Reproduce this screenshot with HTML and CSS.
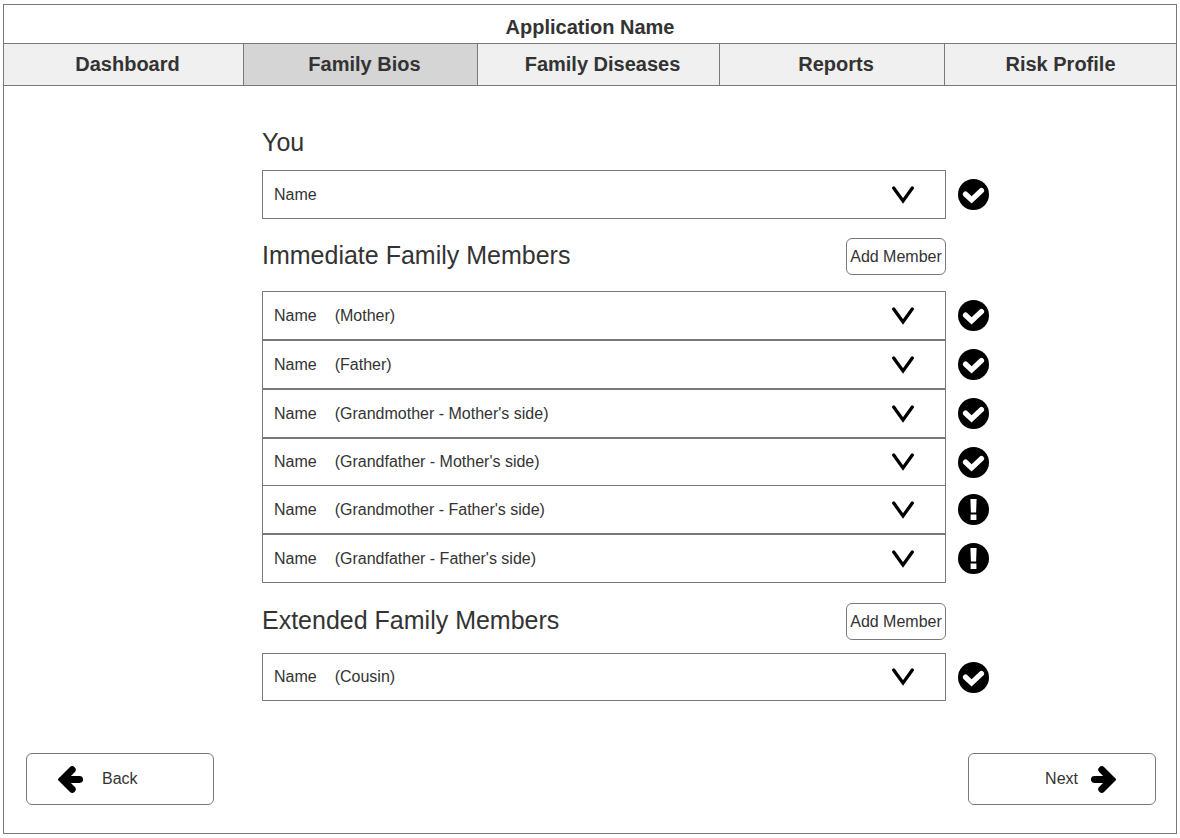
FILE: index.html
```html
<!DOCTYPE html>
<html lang="en">
<head>
<meta charset="utf-8">
<title>Application Name</title>
<link rel="stylesheet" href="styles.css">
</head>
<body>
<svg class="sprite" aria-hidden="true">
  <symbol id="chevron" viewBox="0 0 22 18"><path d="M1.7 2 11 15 20.3 2" fill="none" stroke="#000" stroke-width="3.3" stroke-linecap="round" stroke-linejoin="miter"/></symbol>
  <symbol id="done" viewBox="0 0 31 31"><circle cx="15.5" cy="15.5" r="15.5"/><path d="M7.6 15.2 13.6 20.9 23.4 11.6" fill="none" stroke="#fff" stroke-width="5.4" stroke-linecap="round" stroke-linejoin="miter"/></symbol>
  <symbol id="alert" viewBox="0 0 31 31"><circle cx="15.5" cy="15.5" r="15.5"/><path d="M12.4 5h6.2l-.5 13.6h-5.2zM12.6 20.4h5.8V26h-5.8z" fill="#fff"/></symbol>
  <symbol id="arrow-left" viewBox="0 0 25 27"><path d="M14.2 3.8 4.4 13.5 14.2 23.2M5 13.5H21.6" fill="none" stroke="#000" stroke-width="7" stroke-linecap="round" stroke-linejoin="miter"/></symbol>
  <symbol id="arrow-right" viewBox="0 0 25 27"><path d="M10.8 3.8 20.6 13.5 10.8 23.2M20 13.5H3.4" fill="none" stroke="#000" stroke-width="7" stroke-linecap="round" stroke-linejoin="miter"/></symbol>
</svg>
<div class="frame">
  <header class="title"><h1>Application Name</h1></header>
  <nav class="tabs">
    <a href="#dashboard">Dashboard</a>
    <a href="#bios" class="active" aria-current="page">Family Bios</a>
    <a href="#diseases">Family Diseases</a>
    <a href="#reports">Reports</a>
    <a href="#risk">Risk Profile</a>
  </nav>
  <main class="content">
    <section class="group you">
      <div class="head"><h2>You</h2></div>
      <ul>
        <li><button type="button" class="member" aria-expanded="false"><span class="name">Name</span><svg class="chevron"><use href="#chevron"/></svg></button><svg class="status" role="img" aria-label="Complete"><use href="#done"/></svg></li>
      </ul>
    </section>
    <section class="group immediate">
      <div class="head"><h2>Immediate Family Members</h2><button type="button" class="add">Add Member</button></div>
      <ul>
        <li><button type="button" class="member" aria-expanded="false"><span class="name">Name</span><span>(Mother)</span><svg class="chevron"><use href="#chevron"/></svg></button><svg class="status" role="img" aria-label="Complete"><use href="#done"/></svg></li>
        <li><button type="button" class="member" aria-expanded="false"><span class="name">Name</span><span>(Father)</span><svg class="chevron"><use href="#chevron"/></svg></button><svg class="status" role="img" aria-label="Complete"><use href="#done"/></svg></li>
        <li><button type="button" class="member" aria-expanded="false"><span class="name">Name</span><span>(Grandmother - Mother's side)</span><svg class="chevron"><use href="#chevron"/></svg></button><svg class="status" role="img" aria-label="Complete"><use href="#done"/></svg></li>
        <li class="short"><button type="button" class="member" aria-expanded="false"><span class="name">Name</span><span>(Grandfather - Mother's side)</span><svg class="chevron"><use href="#chevron"/></svg></button><svg class="status" role="img" aria-label="Complete"><use href="#done"/></svg></li>
        <li class="joined"><button type="button" class="member" aria-expanded="false"><span class="name">Name</span><span>(Grandmother - Father's side)</span><svg class="chevron"><use href="#chevron"/></svg></button><svg class="status" role="img" aria-label="Incomplete"><use href="#alert"/></svg></li>
        <li><button type="button" class="member" aria-expanded="false"><span class="name">Name</span><span>(Grandfather - Father's side)</span><svg class="chevron"><use href="#chevron"/></svg></button><svg class="status" role="img" aria-label="Incomplete"><use href="#alert"/></svg></li>
      </ul>
    </section>
    <section class="group extended">
      <div class="head"><h2>Extended Family Members</h2><button type="button" class="add">Add Member</button></div>
      <ul>
        <li class="short"><button type="button" class="member" aria-expanded="false"><span class="name">Name</span><span>(Cousin)</span><svg class="chevron"><use href="#chevron"/></svg></button><svg class="status" role="img" aria-label="Complete"><use href="#done"/></svg></li>
      </ul>
    </section>
  </main>
  <footer class="pager">
    <button type="button" class="step back"><svg class="arrow"><use href="#arrow-left"/></svg>Back</button>
    <button type="button" class="step next">Next<svg class="arrow"><use href="#arrow-right"/></svg></button>
  </footer>
</div>
</body>
</html>
```
FILE: styles.css
```css
:root {
  --line: #797979;
  --text: #333;
}

* {
  box-sizing: border-box;
}

body {
  margin: 0;
  padding: 4px 3px;
  background: #fff;
  color: var(--text);
  font-family: "Liberation Sans", Arial, sans-serif;
  font-size: 16px;
  line-height: 20px;
}

h1,
h2,
ul {
  margin: 0;
  padding: 0;
}

ul {
  list-style: none;
}

button {
  color: inherit;
  font: inherit;
  background: #fff;
  border: 1px solid var(--line);
  cursor: pointer;
}

svg {
  display: block;
  flex: none;
}

.sprite {
  position: absolute;
  width: 0;
  height: 0;
}

.frame {
  display: flex;
  flex-direction: column;
  min-height: calc(100vh - 8px);
  border: 1px solid var(--line);
}

.title {
  padding: 10px 0 4px;
  text-align: center;
}

.title h1 {
  font-size: 20px;
  line-height: 24px;
}

.tabs {
  display: grid;
  grid-template-columns: 239fr 234fr 242fr 225fr 232fr;
  border-top: 1px solid var(--line);
  border-bottom: 1px solid var(--line);
}

.tabs a {
  padding: 8px 0 9px 8px;
  background: #f0f0f0;
  border-left: 1px solid var(--line);
  color: inherit;
  font-size: 20px;
  font-weight: bold;
  line-height: 24px;
  text-align: center;
  text-decoration: none;
}

.tabs a:first-child {
  border-left: 0;
}

.tabs a:last-child {
  padding-left: 0;
}

.tabs .active {
  background: #d5d5d5;
}

.content {
  display: grid;
  grid-template-columns: 258fr 727fr 187fr;
  padding-top: 39px;
}

.group {
  grid-column: 2;
}

.head {
  display: flex;
  align-items: flex-start;
  justify-content: space-between;
  min-height: 37px;
  margin: 0 43px 8px 0;
}

.head h2 {
  font-size: 25px;
  font-weight: normal;
  line-height: 34px;
}

.immediate .head {
  margin-top: 19px;
  margin-bottom: 16px;
}

.extended .head {
  margin-top: 20px;
  margin-bottom: 13px;
}

.add {
  width: 100px;
  height: 37px;
  padding: 0;
  border-radius: 6px;
}

.group li {
  display: flex;
  align-items: center;
  gap: 12px;
  height: 49px;
}

.group .short {
  height: 48px;
}

.group .joined {
  margin-top: -1px;
}

.member {
  display: flex;
  flex: 1;
  align-items: center;
  gap: 18px;
  height: 100%;
  padding: 0 31px 0 11px;
  text-align: left;
}

.chevron {
  width: 22px;
  height: 18px;
  margin-left: auto;
}

.status {
  width: 31px;
  height: 31px;
}

.pager {
  display: flex;
  justify-content: space-between;
  margin-top: auto;
  padding: 24px 20px 28px 22px;
}

.step {
  display: flex;
  align-items: center;
  width: 188px;
  height: 52px;
  border-radius: 6px;
}

.arrow {
  width: 25px;
  height: 27px;
}

.back {
  gap: 19px;
  padding: 0 31px;
}

.next {
  justify-content: flex-end;
  gap: 13px;
  padding: 0 39px;
}
```
